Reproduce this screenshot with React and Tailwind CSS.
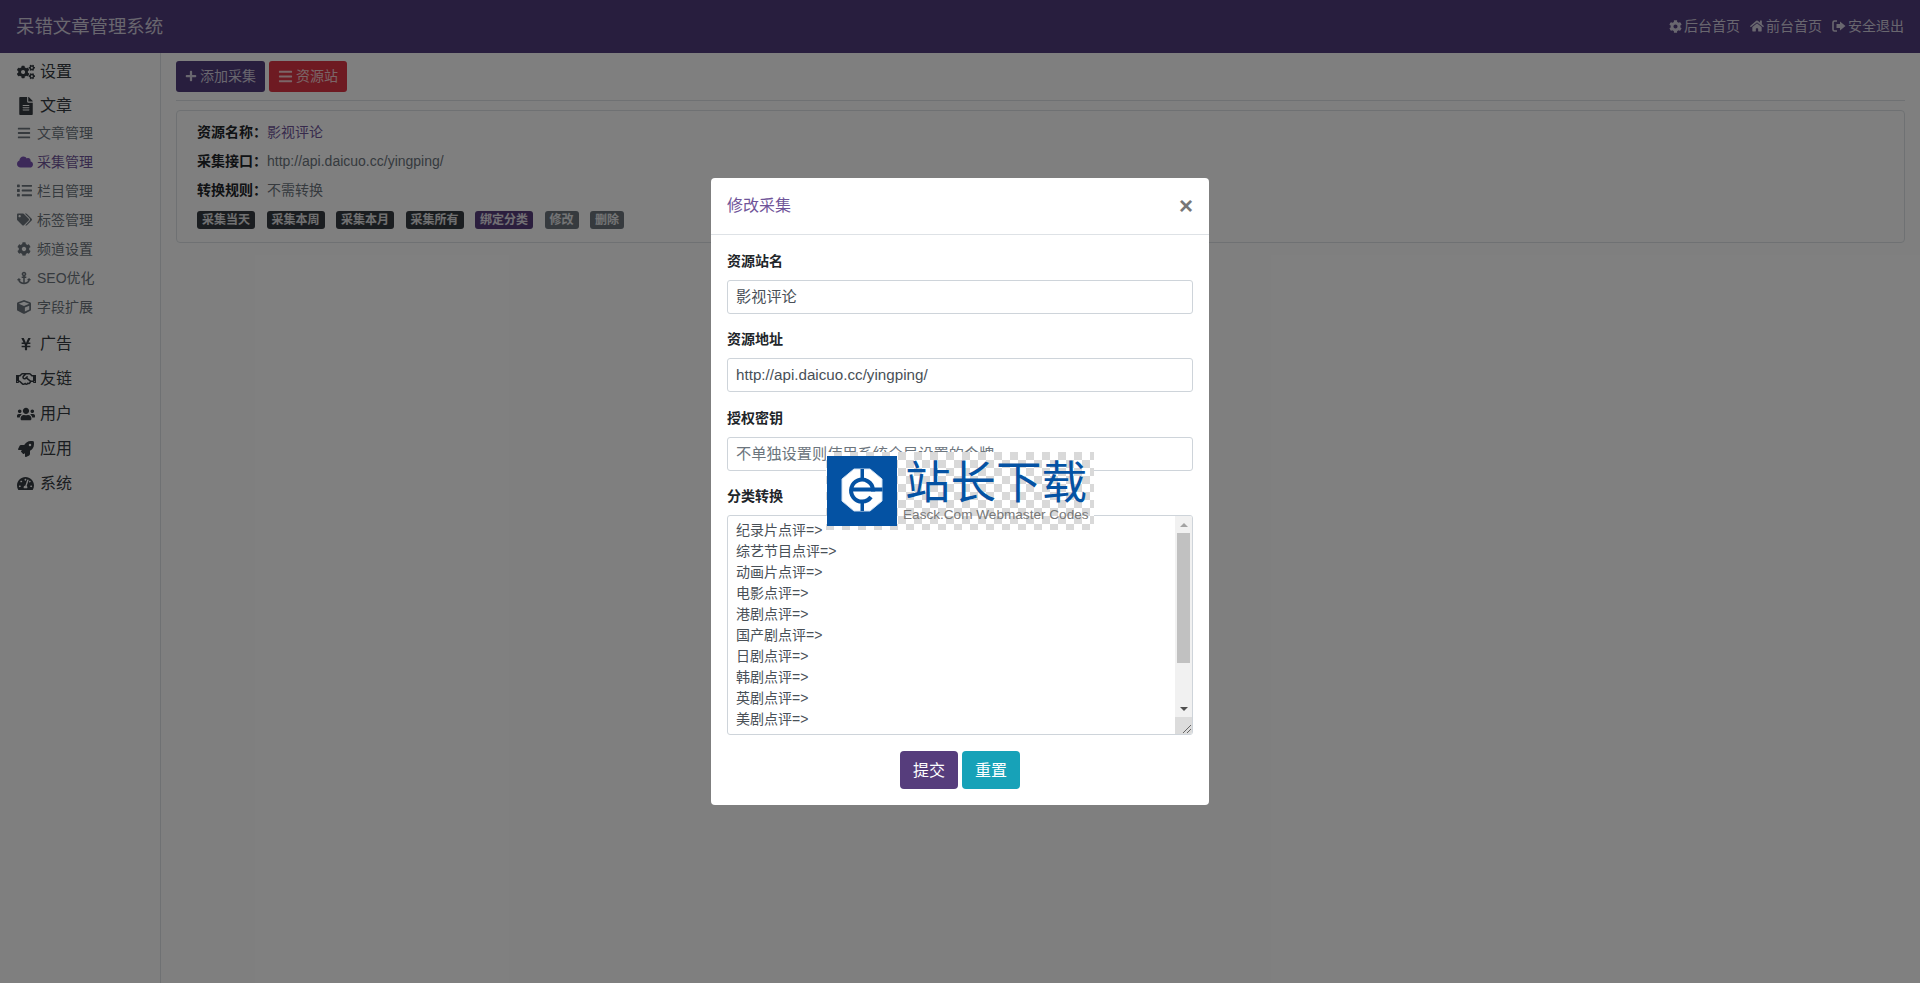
import {
  FaCogs, FaFileAlt, FaBars, FaCloud, FaList, FaTags, FaCog, FaAnchor, FaCube, FaYenSign,
  FaRegHandshake, FaUsers, FaRocket, FaTachometerAlt, FaHome, FaPlus,
} from 'react-icons/fa';

const font = { fontFamily: '"Liberation Sans", "Noto Sans CJK SC", sans-serif' };

const subItems = [
  { label: '文章管理', icon: FaBars, size: 14 },
  { label: '采集管理', icon: FaCloud, size: 16, active: true },
  { label: '栏目管理', icon: FaList, size: 15 },
  { label: '标签管理', icon: FaTags, size: 15 },
  { label: '频道设置', icon: FaCog, size: 14 },
  { label: 'SEO优化', icon: FaAnchor, size: 14 },
  { label: '字段扩展', icon: FaCube, size: 14 },
];

const lowerItems = [
  { label: '广告', icon: FaYenSign, size: 14 },
  { label: '友链', icon: FaRegHandshake, size: 20 },
  { label: '用户', icon: FaUsers, size: 18 },
  { label: '应用', icon: FaRocket, size: 16 },
  { label: '系统', icon: FaTachometerAlt, size: 17 },
];

const badges = [
  { label: '采集当天', cls: 'bg-[#343a40]' },
  { label: '采集本周', cls: 'bg-[#343a40]' },
  { label: '采集本月', cls: 'bg-[#343a40]' },
  { label: '采集所有', cls: 'bg-[#343a40]' },
  { label: '绑定分类', cls: 'bg-[#563d7c]' },
  { label: '修改', cls: 'bg-[#6c757d]' },
  { label: '删除', cls: 'bg-[#6c757d]' },
];

const mappings = ['纪录片', '综艺节目', '动画片', '电影', '港剧', '国产剧', '日剧', '韩剧', '英剧', '美剧'];

function SignOutIcon() {
  return (
    <svg width="14" height="14" viewBox="0 0 14 14" fill="none">
      <path d="M5 2H2.500A1.500 1.500 0 0 0 1 3.500v7A1.500 1.500 0 0 0 2.500 12H5" stroke="currentColor" strokeWidth="1.6" />
      <path d="M8 2.500 13.500 7 8 11.500V9H4.500V5H8z" fill="currentColor" />
    </svg>
  );
}

function NavLink({ icon, label }) {
  return (
    <a className="flex items-center gap-[2px] text-sm">
      {icon}
      <span>{label}</span>
    </a>
  );
}

function MainItem({ icon: Icon, size, label }) {
  return (
    <div className="flex h-[35px] items-center text-base text-[#343a40]">
      <span className="mr-[5px] flex w-[19px] justify-center [&>svg]:shrink-0"><Icon size={size} /></span>
      <span>{label}</span>
    </div>
  );
}

function Sidebar() {
  return (
    <aside className="w-[161px] shrink-0 border-r border-[#dee2e6] pl-[16px] pt-[1px]">
      <MainItem icon={FaCogs} size={18} label="设置" />
      <div className="-mt-[1px]">
        <MainItem icon={FaFileAlt} size={18} label="文章" />
      </div>
      <div className="-mt-[5px] ml-[1px] flex flex-col">
        {subItems.map((item) => (
          <div
            key={item.label}
            className={`flex h-[29px] items-center text-sm ${item.active ? 'text-[#6f5499]' : 'text-[#6c757d]'}`}
          >
            <span className={`flex w-[20px] justify-start ${item.active ? 'text-[#7952b3]' : 'text-[#6c757d]'}`}>
              <item.icon size={item.size} />
            </span>
            <span>{item.label}</span>
          </div>
        ))}
      </div>
      <div className="mt-[5px]">
        {lowerItems.map((item) => (
          <MainItem key={item.label} icon={item.icon} size={item.size} label={item.label} />
        ))}
      </div>
    </aside>
  );
}

function Field({ label, value, placeholder, className }) {
  return (
    <div className={className}>
      <label className="block h-[21px] text-sm leading-[21px] font-bold text-[#212529]">{label}</label>
      <div className="mt-[8px] flex h-[34px] items-center rounded-[3px] border border-[#ced4da] px-[8px] text-[15.2px] text-[#495057]">
        {value ? <span>{value}</span> : <span className="text-[#6c757d]">{placeholder}</span>}
      </div>
    </div>
  );
}

function Watermark() {
  return (
    <div className="absolute top-[274px] left-[115px] h-[78px] w-[268px] bg-white bg-[conic-gradient(#d9d9d9_25%,#ffffff_0_50%,#d9d9d9_0_75%,#ffffff_0)] bg-[length:16px_16px]">
      <div className="flex h-full items-center">
        <svg width="70" height="70" viewBox="0 0 70 70" className="ml-[1px] shrink-0">
          <rect width="70" height="70" fill="#0452a3" />
          <path d="M27 13h16l12 10v22L43 55H27L15 45V23z" fill="#fff" stroke="#cfe0f2" strokeWidth="1" />
          <path d="M33.500 13h3.500v9h-3.500zM33.500 47h3.500v8h-3.500z" fill="#0452a3" />
          <path d="M44 41a11 11 0 1 1 2-7.500H26" fill="none" stroke="#0452a3" strokeWidth="4" />
          <path d="M44 31.500h11.500v4H44z" fill="#0452a3" />
        </svg>
        <div className="ml-[6px] flex flex-col items-start">
          <div className="ml-[2px] text-[45.5px] leading-[48px] text-[#0452a3]">站长下载</div>
          <div className="-mt-[1px] text-[13.600px] leading-[16px] text-[#777]">Easck.Com Webmaster Codes</div>
        </div>
      </div>
    </div>
  );
}

function Modal() {
  return (
    <div className="relative mx-auto mt-[178px] h-[627px] w-[498px] rounded-[4px] bg-white">
      <div className="flex h-[57px] items-center justify-between border-b border-[#dee2e6] px-[16px]">
        <span className="text-base text-[#6f5499]">修改采集</span>
        <span className="text-[24px] leading-none font-bold text-[#777]">×</span>
      </div>
      <div className="px-[16px] pt-[16px]">
        <Field label="资源站名" value="影视评论" />
        <Field label="资源地址" value="http://api.daicuo.cc/yingping/" className="mt-[15px]" />
        <Field label="授权密钥" placeholder="不单独设置则使用系统全局设置的令牌" className="mt-[16px]" />
        <div className="mt-[15px]">
          <label className="block h-[21px] text-sm leading-[21px] font-bold text-[#212529]">分类转换</label>
          <div className="mt-[8px] flex h-[220px] overflow-hidden rounded-[3px] border border-[#ced4da]">
            <div className="flex-1 px-[8px] pt-[4px] text-sm leading-[21px] text-[#495057]">
              {mappings.map((name) => (
                <div key={name}>{name}点评=&gt;</div>
              ))}
            </div>
            <div className="flex w-[17px] flex-col bg-[#f1f1f1]">
              <div className="flex h-[17px] items-center justify-center">
                <div className="h-0 w-0 border-x-[4px] border-b-[4px] border-x-transparent border-b-[#a3a3a3]" />
              </div>
              <div className="mx-[2px] h-[130px] bg-[#c1c1c1]" />
              <div className="flex-1" />
              <div className="flex h-[17px] items-center justify-center">
                <div className="h-0 w-0 border-x-[4px] border-t-[4px] border-x-transparent border-t-[#505050]" />
              </div>
              <div className="flex h-[17px] items-end justify-end bg-[#dcdcdc] pr-[1px] pb-[1px]">
                <svg width="9" height="9" viewBox="0 0 9 9" stroke="#666" strokeWidth="1">
                  <path d="M1 9 9 1M5 9l4-4" />
                </svg>
              </div>
            </div>
          </div>
        </div>
        <div className="mt-[16px] flex justify-center gap-[4px]">
          <button className="h-[38px] w-[58px] rounded-[4px] bg-[#563d7c] pt-[1px] text-base text-white">提交</button>
          <button className="h-[38px] w-[58px] rounded-[4px] bg-[#17a2b8] pt-[1px] text-base text-white">重置</button>
        </div>
      </div>
      <Watermark />
    </div>
  );
}

export default function App() {
  return (
    <div className="relative h-[983px] overflow-hidden bg-white text-[#212529]" style={font}>
      <header className="flex h-[53px] items-center justify-between bg-[#503c7c] px-[16px] text-white/75">
        <span className="text-[18.400px]">呆错文章管理系统</span>
        <nav className="flex items-center gap-[10px] pb-[1px]">
          <NavLink icon={<FaCog size={13} />} label="后台首页" />
          <NavLink icon={<FaHome size={14} />} label="前台首页" />
          <NavLink icon={<SignOutIcon />} label="安全退出" />
        </nav>
      </header>
      <div className="flex h-[930px]">
        <Sidebar />
        <main className="flex-1 px-[15px] pt-[8px]">
          <div className="flex gap-[4px]">
            <button className="flex h-[31px] w-[89px] items-center justify-center gap-[3px] rounded-[3px] bg-[#503c7c] pb-[1px] text-sm text-white/75">
              <FaPlus size={12} />添加采集
            </button>
            <button className="flex h-[31px] w-[78px] items-center justify-center gap-[3px] rounded-[3px] bg-[#dc3545] pb-[1px] text-sm text-white/75">
              <FaBars size={15} />资源站
            </button>
          </div>
          <hr className="mt-[8px] border-[#dee2e6]" />
          <section className="mt-[9px] h-[133px] rounded-[4px] border border-[#dee2e6] px-[20px] pt-[11px] text-sm">
            <div className="h-[29px] leading-[21px]">
              <b>资源名称：</b><span className="text-[#6f5499]">影视评论</span>
            </div>
            <div className="h-[29px] leading-[21px]">
              <b>采集接口：</b><span className="text-[#6c757d]">http://api.daicuo.cc/yingping/</span>
            </div>
            <div className="h-[29px] leading-[21px]">
              <b>转换规则：</b><span className="text-[#6c757d]">不需转换</span>
            </div>
            <div className="mt-[2px] flex gap-[11.500px]">
              {badges.map((badge) => (
                <span key={badge.label} className={`flex h-[18px] items-center rounded-[3px] px-[5px] text-xs font-bold text-white/85 ${badge.cls}`}>
                  {badge.label}
                </span>
              ))}
            </div>
          </section>
        </main>
      </div>
      {/* modal backdrop */}
      <div className="absolute inset-0 overflow-hidden bg-black/50">
        <Modal />
      </div>
    </div>
  );
}
